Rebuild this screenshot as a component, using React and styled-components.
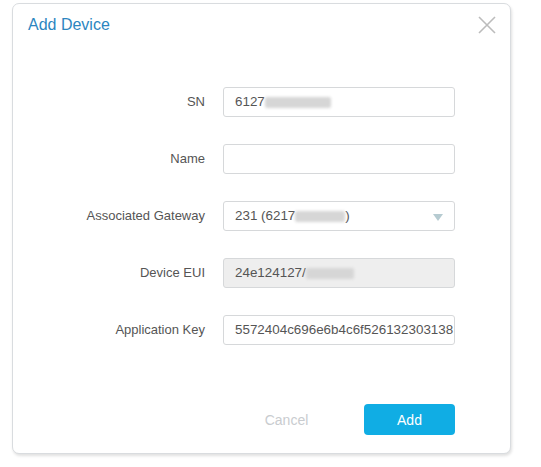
import React from "react";
import styled, { createGlobalStyle } from "styled-components";

const Global = createGlobalStyle`
  html, body { margin: 0; padding: 0; background: #fff; }
  body { font-family: "Liberation Sans", Arial, sans-serif; }
`;

const Page = styled.div`
  width: 541px;
  height: 467px;
  padding: 3px 0 0 12px;
  box-sizing: border-box;
  background: #fff;
`;

const Dialog = styled.div`
  width: 499px;
  height: 451px;
  box-sizing: border-box;
  border: 1px solid #d9dcdf;
  border-radius: 7px;
  background: #fff;
  box-shadow: 1px 2px 3px rgba(0, 0, 0, 0.12);
  display: flex;
  flex-direction: column;
`;

const Header = styled.div`
  display: flex;
  justify-content: space-between;
  align-items: flex-start;
  padding: 11px 12px 0 15px;
  height: 64px;
  box-sizing: border-box;
`;

const Title = styled.h2`
  margin: 0;
  font-size: 16px;
  font-weight: normal;
  color: #2c86bf;
  line-height: 20px;
`;

const Close = styled.button`
  border: 0;
  background: none;
  padding: 0;
  width: 22px;
  height: 22px;
  margin-top: -1px;
  cursor: pointer;
  display: flex;
`;

const Form = styled.div`
  display: grid;
  grid-template-columns: 192px 232px;
  column-gap: 18px;
  row-gap: 27px;
  margin-top: 19px;
`;

const Label = styled.label`
  text-align: right;
  font-size: 13px;
  color: #555;
  line-height: 30px;
  height: 30px;
`;

const Field = styled.div`
  position: relative;
  height: 30px;
  box-sizing: border-box;
  border: 1px solid #d6d8da;
  border-radius: 3px;
  background: ${(p) => (p.$disabled ? "#eeeeee" : "#fff")};
  padding: 0 0 0 11px;
  font-size: 13.4px;
  color: #555;
  line-height: 28px;
  white-space: nowrap;
  overflow: hidden;
  display: flex;
  align-items: center;
`;

const Blur = styled.span`
  display: inline-block;
  width: ${(p) => p.$w}px;
  height: 11px;
  background: #d6d6d6;
  filter: blur(1.5px);
  border-radius: 2px;
`;

const Arrow = styled.span`
  position: absolute;
  right: 11px;
  top: 12px;
  width: 0;
  height: 0;
  border-left: 5px solid transparent;
  border-right: 5px solid transparent;
  border-top: 7px solid #b6cbd1;
`;

const Footer = styled.div`
  margin-top: auto;
  display: flex;
  justify-content: flex-end;
  gap: 28px;
  padding: 0 55px 18px 0;
`;

const Button = styled.button`
  width: 91px;
  height: 31px;
  border: 0;
  border-radius: 4px;
  font-family: "Liberation Sans", Arial, sans-serif;
  font-size: 14px;
  cursor: pointer;
  background: ${(p) => (p.$primary ? "#10ade4" : "transparent")};
  color: ${(p) => (p.$primary ? "#fff" : "#c9cccf")};
  margin-right: ${(p) => (p.$primary ? 0 : 4)}px;
`;

export default function App() {
  return (
    <>
      <Global />
      <Page>
        <Dialog>
          <Header>
            <Title>Add Device</Title>
            <Close aria-label="close">
              <svg width="22" height="22" viewBox="0 0 22 22">
                <path d="M3 3 L19 19 M19 3 L3 19" stroke="#bcbcbc" strokeWidth="1.6" fill="none" />
              </svg>
            </Close>
          </Header>
          <Form>
            <Label>SN</Label>
            <Field>
              6127<Blur $w={66} />
            </Field>
            <Label>Name</Label>
            <Field />
            <Label>Associated Gateway</Label>
            <Field>
              231 (6217<Blur $w={50} />)
              <Arrow />
            </Field>
            <Label>Device EUI</Label>
            <Field $disabled>
              24e124127/<Blur $w={48} />
            </Field>
            <Label>Application Key</Label>
            <Field>5572404c696e6b4c6f526132303138</Field>
          </Form>
          <Footer>
            <Button>Cancel</Button>
            <Button $primary>Add</Button>
          </Footer>
        </Dialog>
      </Page>
    </>
  );
}
